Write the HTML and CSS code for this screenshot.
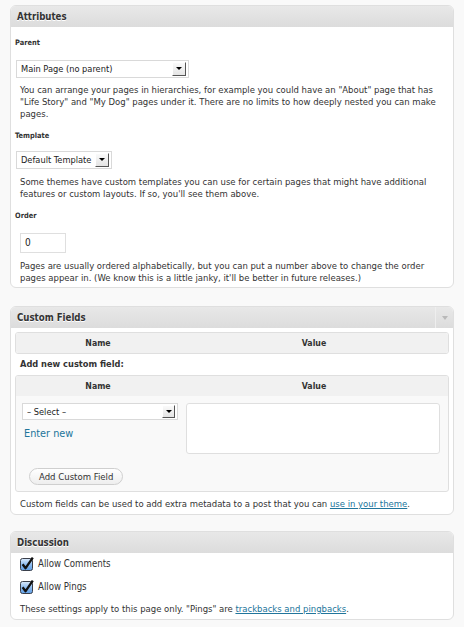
FILE: index.html
```html
<!DOCTYPE html>
<html>
<head>
<meta charset="utf-8">
<link rel="stylesheet" href="styles.css">
</head>
<body>
<div class="postbox box-attr">
  <h3 class="hndle"><span class="title">Attributes</span></h3>
  <div class="inside">
    <p class="label lbl-parent">Parent</p>
    <div class="select sel-parent"><span class="sel-text">Main Page (no parent)</span><span class="sel-btn"><i></i></span></div>
    <p class="howto howto-1">You can arrange your pages in hierarchies, for example you could have an "About" page that has "Life Story" and "My Dog" pages under it. There are no limits to how deeply nested you can make pages.</p>
    <p class="label lbl-template">Template</p>
    <div class="select sel-template"><span class="sel-text">Default Template</span><span class="sel-btn"><i></i></span></div>
    <p class="howto howto-2">Some themes have custom templates you can use for certain pages that might have additional features or custom layouts. If so, you'll see them above.</p>
    <p class="label lbl-order">Order</p>
    <div class="text-input">0</div>
    <p class="howto howto-3">Pages are usually ordered alphabetically, but you can put a number above to change the order pages appear in. (We know this is a little janky, it'll be better in future releases.)</p>
  </div>
</div>

<div class="postbox box-custom">
  <h3 class="hndle"><span class="title">Custom Fields</span><span class="toggle"><i></i></span></h3>
  <div class="inside">
    <div class="cf-table cf-list">
      <div class="cf-head"><span>Name</span><span>Value</span></div>
    </div>
    <p class="add-new">Add new custom field:</p>
    <div class="cf-table cf-new">
      <div class="cf-head"><span>Name</span><span>Value</span></div>
      <div class="cf-body">
        <div class="cf-col-name">
          <div class="select sel-key"><span class="sel-text">– Select –</span><span class="sel-btn"><i></i></span></div>
          <a class="enter-new">Enter new</a>
        </div>
        <div class="cf-col-value">
          <div class="textarea"></div>
        </div>
        <div class="cf-submit"><span class="button">Add Custom Field</span></div>
      </div>
    </div>
    <p class="note">Custom fields can be used to add extra metadata to a post that you can <a class="link">use in your theme</a>.</p>
  </div>
</div>

<div class="postbox box-disc">
  <h3 class="hndle"><span class="title">Discussion</span></h3>
  <div class="inside">
    <div class="check-row row-1">
      <svg class="cb" width="14" height="14" viewBox="0 0 14 14"><defs><linearGradient id="g1" x1="0" y1="0" x2="0" y2="1"><stop offset="0" stop-color="#dcebfb"/><stop offset="0.5" stop-color="#8ebcf0"/><stop offset="1" stop-color="#5f9de3"/></linearGradient></defs><rect x="0.5" y="1.5" width="12" height="12" rx="2" fill="url(#g1)" stroke="#3a3f4a"/><path d="M2.6 7.2 L5.6 11.2 L12.8 0.6" fill="none" stroke="#111" stroke-width="2.3" stroke-linejoin="round"/></svg>
      <span>Allow Comments</span>
    </div>
    <div class="check-row row-2">
      <svg class="cb" width="14" height="14" viewBox="0 0 14 14"><defs><linearGradient id="g2" x1="0" y1="0" x2="0" y2="1"><stop offset="0" stop-color="#dcebfb"/><stop offset="0.5" stop-color="#8ebcf0"/><stop offset="1" stop-color="#5f9de3"/></linearGradient></defs><rect x="0.5" y="1.5" width="12" height="12" rx="2" fill="url(#g2)" stroke="#3a3f4a"/><path d="M2.6 7.2 L5.6 11.2 L12.8 0.6" fill="none" stroke="#111" stroke-width="2.3" stroke-linejoin="round"/></svg>
      <span>Allow Pings</span>
    </div>
    <p class="note note-disc">These settings apply to this page only. "Pings" are <a class="link">trackbacks and pingbacks</a>.</p>
  </div>
</div>
</body>
</html>
```

FILE: styles.css
```css
body {
  margin: 0;
  padding: 5px 10px 0;
  background: #f9f9f9;
  color: #333;
  font-family: "DejaVu Sans Condensed", "DejaVu Sans", sans-serif;
  font-stretch: condensed;
  font-size: 9.2px;
  line-height: 12px;
}

p { margin: 0; }

.postbox {
  background: #fff;
  border: 1px solid #dfdfdf;
  border-radius: 6px;
  overflow: hidden;
}

.box-attr { margin-bottom: 18px; }
.box-custom { margin-bottom: 16px; }

.hndle {
  margin: 0;
  height: 21px;
  display: flex;
  align-items: center;
  padding-left: 6px;
  background: linear-gradient(#e8e8e8, #dcdcdc);
  font-size: 9.6px;
  font-weight: bold;
  color: #333;
  text-shadow: 0 1px 0 #fff;
}

.hndle .title { flex: 1; }

.toggle {
  align-self: stretch;
  width: 17px;
  border-left: 1px solid #eeeeee;
  display: flex;
  align-items: center;
  justify-content: center;
}

.toggle i {
  width: 0;
  height: 0;
  border-left: 3.5px solid transparent;
  border-right: 3.5px solid transparent;
  border-top: 4px solid #b9b9b9;
}

.inside { padding: 0 6px 3px 4px; }
.box-custom .inside { padding: 0 4px 4px 4px; }
.box-disc .inside { padding: 0 6px 4px 4px; }

.label {
  font-size: 7.4px;
  font-weight: bold;
  line-height: 12px;
  color: #333;
}

.lbl-parent { margin-top: 10px; }
.lbl-template { margin-top: 10px; }
.lbl-order { margin-top: 10px; }

.select {
  display: flex;
  align-items: center;
  box-sizing: border-box;
  height: 18px;
  border: 1px solid #d9d9d9;
  background: #fff;
  padding: 0 2px 0 4px;
  color: #222;
}

.sel-text { flex: 1; white-space: nowrap; overflow: hidden; }

.sel-btn {
  box-sizing: border-box;
  width: 14px;
  height: 14px;
  background: linear-gradient(#fafafa, #e4e4e4);
  border-top: 1px solid #fff;
  border-left: 1px solid #fff;
  border-right: 1px solid #555;
  border-bottom: 1px solid #555;
  display: flex;
  align-items: center;
  justify-content: center;
  margin-top: -1px;
}

.sel-btn i {
  width: 0;
  height: 0;
  border-left: 3px solid transparent;
  border-right: 3px solid transparent;
  border-top: 3.5px solid #000;
}

.sel-parent { width: 173px; margin: 11px 0 0 1px; }
.sel-template { width: 96px; margin: 9px 0 0 1px; }

.howto { margin-left: 5px; font-size: 9.45px; }
.howto-1 { margin-top: 6px; }
.howto-2 { margin-top: 7px; }
.howto-3 { margin-top: 7px; }

.text-input {
  box-sizing: border-box;
  width: 46px;
  height: 20px;
  margin: 11px 0 0 5px;
  border: 1px solid #dfdfdf;
  padding-left: 4px;
  font-size: 10px;
  line-height: 18px;
  color: #222;
}

.cf-table {
  border: 1px solid #dfdfdf;
  border-radius: 3px;
  overflow: hidden;
}

.cf-list { margin-top: 4px; }
.cf-new { margin-top: 5px; background: #f9f9f9; }

.cf-head {
  display: grid;
  grid-template-columns: 164px 1fr;
  height: 20px;
  align-items: center;
  background: #f1f1f1;
  font-size: 8.7px;
  font-weight: bold;
  text-align: center;
  color: #333;
}

.add-new {
  margin: 4px 0 0 5px;
  font-weight: bold;
}

.cf-body {
  display: grid;
  grid-template-columns: 165px 1fr;
  padding: 7px 0 6px;
}

.cf-col-name { padding-left: 6px; }

.sel-key {
  width: 156px;
  height: 17px;
  padding-left: 4px;
}

.sel-key .sel-btn { height: 13px; width: 13px; }

.enter-new {
  display: block;
  margin-top: 7px;
  line-height: 14px;
  font-size: 10.8px;
  color: #21759b;
  padding-left: 2px;
}

.cf-col-value { padding-left: 5px; }

.textarea {
  box-sizing: border-box;
  width: 254px;
  height: 51px;
  background: #fff;
  border: 1px solid #dfdfdf;
  border-radius: 3px;
}

.cf-submit {
  grid-column: 1 / 3;
  padding: 14px 0 0 13px;
}

.button {
  display: inline-flex;
  align-items: center;
  box-sizing: border-box;
  height: 17px;
  padding: 0 9px;
  border: 1px solid #cfcfcf;
  border-radius: 9px;
  background: linear-gradient(#ffffff, #eeeeee);
  font-size: 9.5px;
  color: #333;
}

.note { margin: 6px 0 0 5px; font-size: 9.45px; }
.note-disc { margin-top: 8px; }

.link {
  color: #21759b;
  text-decoration: underline;
}

.check-row {
  display: flex;
  align-items: center;
  gap: 4px;
  height: 16px;
  margin-left: 5px;
  font-size: 9.6px;
}

.cb { flex: none; }

.row-1 { margin-top: 3px; }
.row-2 { margin-top: 7px; }
```
